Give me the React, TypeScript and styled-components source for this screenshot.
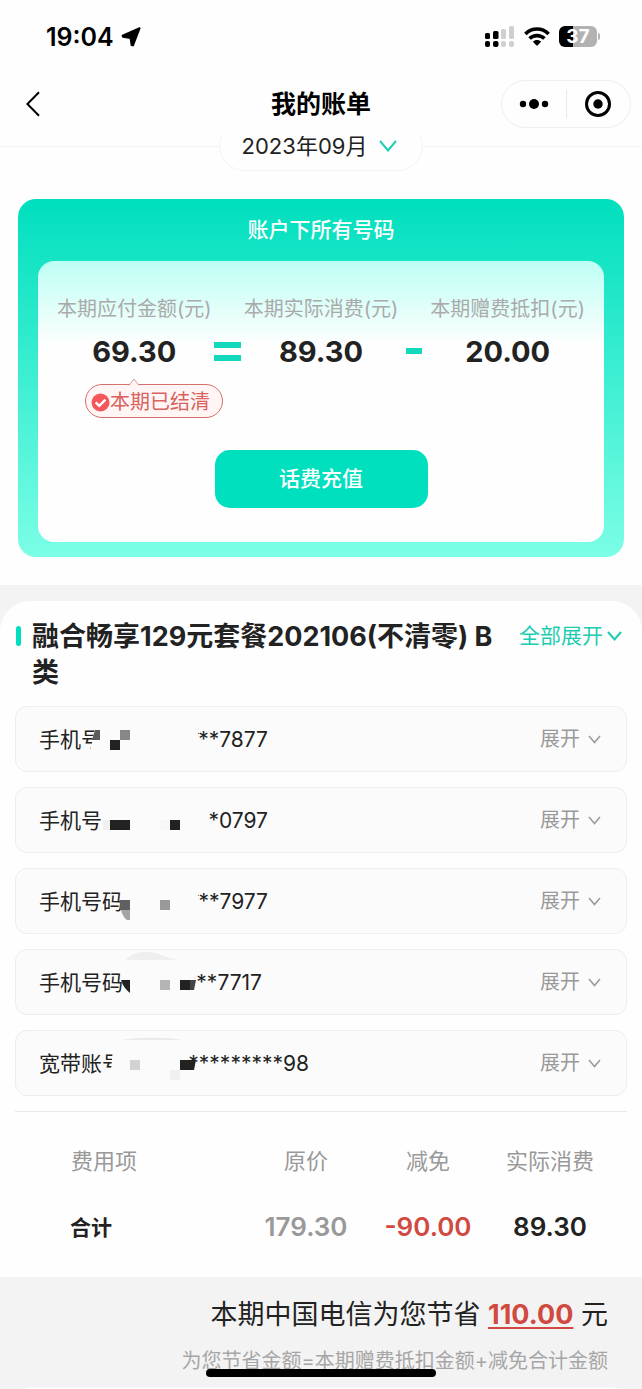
import React from "react";
import styled, { createGlobalStyle } from "styled-components";

const teal = "#00dfbe";
const ink = "#222222";
const grey = "#999999";
const red = "#d14a41";

const GlobalStyle = createGlobalStyle`
  *, *::before, *::after { box-sizing: border-box; }
  body {
    margin: 0;
    background: #fefefe;
    color: ${ink};
    font-family: Inter, "Noto Sans CJK SC", sans-serif;
  }
  button {
    margin: 0;
    padding: 0;
    border: 0;
    background: none;
    color: inherit;
    font: inherit;
    cursor: pointer;
  }
  h1, h2, p { margin: 0; font-weight: inherit; }
  svg { display: block; flex: none; }
`;

const Page = styled.div`
  min-height: 100vh;
  background: #fefefe;
`;

/* ---------- status bar and navigation ---------- */

const Header = styled.header`
  position: sticky;
  top: 0;
  z-index: 2;
  background: #fefefe;
`;

const StatusBar = styled.div`
  display: flex;
  align-items: center;
  justify-content: space-between;
  height: 73px;
  padding: 0 42px 0 46px;
`;

const StatusGroup = styled.div<{ $gap: number }>`
  display: flex;
  align-items: center;
  gap: ${(p) => p.$gap}px;
`;

const Clock = styled.span`
  color: #000;
  font-size: 25px;
  font-weight: 600;
  line-height: 30px;
`;

const NavBar = styled.nav`
  display: grid;
  grid-template-columns: 1fr auto 1fr;
  align-items: center;
  height: 63px;
  padding: 0 11px 2px 20px;
`;

const BackButton = styled.button`
  justify-self: start;
  padding: 6px;
`;

const NavTitle = styled.h1`
  color: #000;
  font-size: 25px;
  font-weight: 700;
  line-height: 36px;
  padding: 1px 9px 0 0;
`;

const Capsule = styled.div`
  display: flex;
  align-items: center;
  justify-self: end;
  width: 130px;
  height: 48px;
  border: 1px solid #eeeeee;
  border-radius: 24px;
`;

const CapsuleButton = styled.button`
  display: flex;
  flex: 1;
  align-items: center;
  justify-content: center;
  height: 28px;

  & + & {
    border-left: 1px solid #e8e8e8;
  }
`;

/* ---------- month picker ---------- */

const MonthBar = styled.div`
  display: flex;
  align-items: flex-end;
  height: 35px;
  overflow: hidden;
`;

const MonthRow = styled.div`
  display: flex;
  flex: 1;
  align-items: center;

  &::before,
  &::after {
    content: "";
    flex: 1;
    height: 1px;
    background: #f3f3f3;
  }
`;

const MonthButton = styled.button`
  display: flex;
  align-items: center;
  justify-content: center;
  gap: 12px;
  width: 204px;
  height: 50px;
  padding-right: 3px;
  border: 1px solid #f3f3f3;
  border-radius: 25px;
  font-size: 22px;
  line-height: 20px;
`;

/* ---------- summary card ---------- */

const Summary = styled.section`
  margin: 28px 18px;
  padding: 0 20px 15px;
  border-radius: 18px;
  background: linear-gradient(180deg, ${teal}, #7bfee6);
`;

const SummaryTitle = styled.h2`
  color: #fff;
  font-size: 21px;
  font-weight: 500;
  line-height: 62px;
  text-align: center;
`;

const SummaryBody = styled.div`
  padding: 33px 3px 34px;
  border-radius: 16px;
  background: linear-gradient(180deg, #bdfff4, #fefefe 30%);
`;

const LabelRow = styled.div`
  display: grid;
  grid-template-columns: repeat(3, 1fr);
  color: #aaaaaa;
  font-size: 20px;
  line-height: 30px;
  text-align: center;
  white-space: nowrap;
`;

const FigureRow = styled.div`
  display: grid;
  grid-template-columns: 1fr repeat(5, 2fr) 1fr;
  align-items: center;
  justify-items: center;
  height: 54px;
`;

const Figure = styled.span`
  font-size: 29px;
  font-weight: 700;

  &:first-child {
    grid-column-start: 2;
  }
`;

const PaidBadge = styled.div`
  position: relative;
  display: flex;
  align-items: center;
  width: 138px;
  height: 34px;
  margin: 6px 0 32px 44px;
  padding: 2px 0 0 5px;
  border: 1px solid #d5706c;
  border-radius: 17px;
  background: #fff5f5;
  color: #d9625e;
  font-size: 20px;
  line-height: 30px;
  white-space: nowrap;
`;

const BadgePointer = styled.svg`
  position: absolute;
  top: -7px;
  left: 42px;
`;

const TopUpButton = styled.button`
  display: block;
  width: 213px;
  height: 58px;
  margin: 0 auto;
  padding-bottom: 4px;
  border-radius: 15px;
  background: ${teal};
  color: #fff;
  font-size: 21px;
  font-weight: 500;
`;

/* ---------- plan details ---------- */

const Band = styled.div`
  padding-top: 16px;
  background: #f3f3f3;
`;

const Plan = styled.section`
  padding: 18px 15px 0;
  border-radius: 30px 30px 0 0;
  background: #fefefe;
`;

const PlanHead = styled.div`
  display: flex;
  align-items: flex-start;
  padding: 0 5px 0 1px;
`;

const Accent = styled.span`
  width: 5px;
  height: 20px;
  margin: 7px 11px 0 0;
  border-radius: 3px;
  background: ${teal};
`;

const PlanTitle = styled.h2`
  flex: 1;
  font-size: 27px;
  font-weight: 700;
  line-height: 36px;
`;

const ExpandAll = styled.button`
  display: flex;
  align-items: center;
  gap: 4px;
  margin-left: 8px;
  color: #1bcdb0;
  font-size: 21px;
  line-height: 34px;
  white-space: nowrap;
`;

const AccountList = styled.ul`
  display: flex;
  flex-direction: column;
  gap: 15px;
  margin: 15px 0;
  padding: 0;
  list-style: none;
`;

const AccountCard = styled.li`
  position: relative;
  display: flex;
  align-items: center;
  justify-content: space-between;
  height: 66px;
  padding: 2px 25px 0 23px;
  border: 1px solid #ededed;
  border-radius: 12px;
  background: #fbfbfb;
`;

const AccountText = styled.div<{ $span: number }>`
  display: flex;
  justify-content: space-between;
  width: ${(p) => p.$span}px;
  font-size: 21px;
  line-height: 30px;
  white-space: nowrap;
`;

const Mosaic = styled.svg`
  position: absolute;
  top: -1px;
  left: -1px;
`;

const ExpandButton = styled.button`
  display: flex;
  align-items: center;
  gap: 8px;
  padding-bottom: 2px;
  color: ${grey};
  font-size: 20px;
  line-height: 30px;
`;

const FeeBlock = styled.div`
  padding: 15px 16px 18px 0;
  border-top: 1px solid #e9e9e9;
`;

const FeeTable = styled.table`
  width: 100%;
  border-spacing: 0;
  table-layout: fixed;
`;

const FeeHead = styled.th<{ $first?: boolean }>`
  width: ${(p) => (p.$first ? "auto" : "122px")};
  height: 66px;
  padding: ${(p) => (p.$first ? "0 0 2px 56px" : "0 0 2px")};
  color: ${grey};
  font-size: 22px;
  font-weight: 400;
  text-align: ${(p) => (p.$first ? "left" : "center")};
  white-space: nowrap;
`;

const TotalLabel = styled.th`
  height: 66px;
  padding: 0 0 0 55px;
  font-size: 21px;
  font-weight: 600;
  text-align: left;
`;

const TotalCell = styled.td<{ $color: string }>`
  padding: 0;
  color: ${(p) => p.$color};
  font-size: 26px;
  font-weight: 600;
  text-align: center;
`;

/* ---------- savings ---------- */

const Savings = styled.section`
  padding: 18px 34px 0;
  background: #f3f3f3;
  text-align: right;
  white-space: nowrap;
`;

const SavingsLine = styled.p`
  font-size: 27px;
  line-height: 40px;
`;

const SavedAmount = styled.a`
  color: ${red};
  font-size: 27px;
  font-weight: 700;
  text-decoration: underline;
  text-decoration-thickness: 2px;
  text-underline-offset: 3px;
`;

const SavingsNote = styled.p`
  margin-top: 11px;
  color: #a6a6a6;
  font-size: 20px;
  line-height: 30px;
`;

const NextPanel = styled.div`
  height: 13px;
  padding: 11px 15px 0;
  overflow: hidden;
  background: #f3f3f3;

  &::before {
    content: "";
    display: block;
    height: 40px;
    border-radius: 16px;
    background: #fefefe;
  }
`;

const HomeIndicator = styled.div`
  position: fixed;
  bottom: 12px;
  left: 50%;
  z-index: 3;
  width: 230px;
  height: 8px;
  margin-left: -115px;
  border-radius: 4px;
  background: #000;
`;

/* ---------- drawings ---------- */

const LocationArrow = () => (
  <svg width="20" height="20" viewBox="0 0 20 20" aria-hidden="true">
    <path
      d="M18.6 1.2 1.6 8.6 2 9.8 9.6 11 10.6 18 12 18.4Z"
      fill="#000"
      stroke="#000"
      strokeWidth="2"
      strokeLinejoin="round"
    />
  </svg>
);

const Signal = () => (
  <svg width="30" height="21" viewBox="0 0 30 21" aria-hidden="true">
    <rect x="0" y="7" width="5" height="6" rx="1.5" fill="#000" />
    <rect x="8" y="5" width="5.5" height="8" rx="1.5" fill="#000" />
    <rect x="16" y="3" width="5" height="10" rx="1.5" fill="#cfcfcf" />
    <rect x="24" y="0" width="5" height="13" rx="1.5" fill="#cfcfcf" />
    <rect x="0" y="15" width="5" height="6" rx="2" fill="#000" />
    <rect x="8" y="15" width="5.5" height="6" rx="2" fill="#000" />
    <rect x="16" y="15" width="5" height="6" rx="2" fill="#cfcfcf" />
    <rect x="24" y="15" width="5" height="6" rx="2" fill="#cfcfcf" />
  </svg>
);

const Wifi = () => (
  <svg width="26" height="19" viewBox="0 0 26 19" aria-hidden="true">
    <g fill="none" stroke="#000" strokeWidth="3.6">
      <path d="M1.4 7C8 0.4 18 0.4 24.6 7" />
      <path d="M5.6 11.6C9.6 7.6 16.4 7.6 20.4 11.6" />
    </g>
    <path d="M8.8 14.6C11 12.4 15 12.4 17.2 14.6L13.8 18.3C13.4 18.7 12.6 18.7 12.2 18.3Z" fill="#000" />
  </svg>
);

const BatteryBox = styled.div`
  display: flex;
  align-items: center;
  gap: 1px;

  &::after {
    content: "";
    width: 2px;
    height: 7px;
    border-radius: 0 2px 2px 0;
    background: #b5b5b5;
  }
`;

const BatteryLevel = styled.span`
  width: 38px;
  height: 21px;
  border-radius: 6px;
  background: linear-gradient(90deg, #000 37%, #b2b2b2 37%);
  color: #fff;
  font-size: 19px;
  font-weight: 700;
  line-height: 21px;
  text-align: center;
`;

const Chevron = ({ w, h, color, stroke }: { w: number; h: number; color: string; stroke: number }) => (
  <svg width={w} height={h} viewBox={`0 0 ${w} ${h}`} aria-hidden="true">
    <path
      d={`M1 1 L${w / 2} ${h - 1.5} L${w - 1} 1`}
      fill="none"
      stroke={color}
      strokeWidth={stroke}
    />
  </svg>
);

const EqualsSign = () => (
  <svg width="27" height="19" viewBox="0 0 27 19" role="img" aria-label="等于">
    <path d="M0 0H27V6H0ZM0 13H27V19H0Z" fill="#12d9bb" />
  </svg>
);

const MinusSign = () => (
  <svg width="16" height="6" viewBox="0 0 16 6" role="img" aria-label="减">
    <path d="M0 0H16V6H0Z" fill="#12d9bb" />
  </svg>
);

/* ---------- data ---------- */

interface Account {
  label: string;
  number: string;
  span: number;
  mask: React.ReactNode;
}

const cover = "#fbfbfb";

const accounts: Account[] = [
  {
    label: "手机号",
    number: "**7877",
    span: 229,
    mask: (
      <>
        <path d="M80 22H90V52H76V42Z" fill={cover} />
        <path d="M80 24H85V34H77Z" fill="#5c5c5c" />
        <path d="M105 24H115V34H105Z" fill="#888" />
        <path d="M95 34H105V44H95Z" fill="#222" />
        <path d="M183 27h1v1h-1Z" fill="#555" />
      </>
    ),
  },
  {
    label: "手机号",
    number: "*0797",
    span: 229,
    mask: (
      <>
        <path d="M88 33H95V43H88Z" fill="#f0f0f0" />
        <path d="M95 33H115V43H95Z" fill="#222" />
        <path d="M145 33H155V43H145Z" fill="#f7f7f7" />
        <path d="M155 33H165V43H155Z" fill="#222" />
      </>
    ),
  },
  {
    label: "手机号码",
    number: "**7977",
    span: 229,
    mask: (
      <>
        <path d="M105 32H115V42H105Z" fill="#606060" />
        <path d="M106 42H115V52H112C109 50 107 46 106 42Z" fill="#a5a5a5" />
        <path d="M145 32H155V42H145Z" fill="#999" />
        <path d="M183 27h1v1h-1Z" fill="#888" />
      </>
    ),
  },
  {
    label: "手机号码",
    number: "**7717",
    span: 223,
    mask: (
      <>
        <path d="M111 11C118 1 134 2 144 5C151 8 157 10 164 11Z" fill="#efefef" />
        <path d="M106 31H115V44C111 41 108 37 106 31Z" fill="#222" />
        <path d="M145 31H155V41H145Z" fill="#b5b5b5" />
        <path d="M165 31H176V41H165Z" fill="#222" />
        <path d="M175 31H181L179 41H175Z" fill="#444" />
      </>
    ),
  },
  {
    label: "宽带账号",
    number: "*********98",
    span: 270,
    mask: (
      <>
        <path d="M108 10C118 7 155 7 167 10Z" fill="#eaeaea" />
        <path d="M98 18H112V52H96V40Z" fill={cover} />
        <path d="M115 30H125V40H115Z" fill="#d3d3d3" />
        <path d="M165 30H181L179 40H165Z" fill="#222" />
        <path d="M155 40H165V50H155Z" fill="#f0f0f0" />
      </>
    ),
  },
];

export default function App() {
  return (
    <>
      <GlobalStyle />
      <Page>
        <Header>
          <StatusBar>
            <StatusGroup $gap={7}>
              <Clock>19:04</Clock>
              <LocationArrow />
            </StatusGroup>
            <StatusGroup $gap={9}>
              <Signal />
              <Wifi />
              <BatteryBox>
                <BatteryLevel>37</BatteryLevel>
              </BatteryBox>
            </StatusGroup>
          </StatusBar>
          <NavBar>
            <BackButton aria-label="返回">
              <svg width="14" height="26" viewBox="0 0 14 26" aria-hidden="true">
                <path d="M13 1.2 1.4 13 13 24.8" fill="none" stroke="#000" strokeWidth="2" />
              </svg>
            </BackButton>
            <NavTitle>我的账单</NavTitle>
            <Capsule>
              <CapsuleButton aria-label="更多">
                <svg width="30" height="10" viewBox="0 0 30 10" aria-hidden="true">
                  <circle cx="4" cy="5" r="3.2" />
                  <circle cx="15" cy="5" r="5" />
                  <circle cx="26" cy="5" r="3.2" />
                </svg>
              </CapsuleButton>
              <CapsuleButton aria-label="关闭">
                <svg width="26" height="26" viewBox="0 0 26 26" aria-hidden="true">
                  <circle cx="13" cy="13" r="11.5" fill="none" stroke="#000" strokeWidth="3" />
                  <circle cx="13" cy="13" r="4.7" />
                </svg>
              </CapsuleButton>
            </Capsule>
          </NavBar>
        </Header>

        <MonthBar>
          <MonthRow>
            <MonthButton>
              2023年09月
              <Chevron w={18} h={12} color="#1fcfb3" stroke={2} />
            </MonthButton>
          </MonthRow>
        </MonthBar>

        <Summary>
          <SummaryTitle>账户下所有号码</SummaryTitle>
          <SummaryBody>
            <LabelRow>
              <span>本期应付金额(元)</span>
              <span>本期实际消费(元)</span>
              <span>本期赠费抵扣(元)</span>
            </LabelRow>
            <FigureRow>
              <Figure>69.30</Figure>
              <EqualsSign />
              <Figure>89.30</Figure>
              <MinusSign />
              <Figure>20.00</Figure>
            </FigureRow>
            <PaidBadge>
              <BadgePointer width="12" height="8" viewBox="0 0 12 8" aria-hidden="true">
                <path d="M1 7.5 6 1 11 7.5" fill="#fff5f5" stroke="#e09a97" />
              </BadgePointer>
              <svg width="19" height="19" viewBox="0 0 19 19" aria-hidden="true">
                <circle cx="9.5" cy="9.5" r="9" fill="#f4565a" />
                <path d="M4.6 9.4 8.3 12.8 14.4 6.6" fill="none" stroke="#fff" strokeWidth="2.4" />
              </svg>
              本期已结清
            </PaidBadge>
            <TopUpButton>话费充值</TopUpButton>
          </SummaryBody>
        </Summary>

        <Band>
          <Plan>
            <PlanHead>
              <Accent />
              <PlanTitle>融合畅享129元套餐202106(不清零) B类</PlanTitle>
              <ExpandAll>
                全部展开
                <Chevron w={15} h={10} color="#1bcdb0" stroke={2} />
              </ExpandAll>
            </PlanHead>

            <AccountList>
              {accounts.map((a, i) => (
                <AccountCard key={i}>
                  <AccountText $span={a.span}>
                    <span>{a.label}</span>
                    <span>{a.number}</span>
                  </AccountText>
                  <Mosaic width="200" height="66" viewBox="0 0 200 66" aria-hidden="true">
                    {a.mask}
                  </Mosaic>
                  <ExpandButton>
                    展开
                    <Chevron w={13} h={9} color="#999" stroke={1.5} />
                  </ExpandButton>
                </AccountCard>
              ))}
            </AccountList>

            <FeeBlock>
              <FeeTable>
                <thead>
                  <tr>
                    <FeeHead scope="col" $first>费用项</FeeHead>
                    <FeeHead scope="col">原价</FeeHead>
                    <FeeHead scope="col">减免</FeeHead>
                    <FeeHead scope="col">实际消费</FeeHead>
                  </tr>
                </thead>
                <tbody>
                  <tr>
                    <TotalLabel scope="row">合计</TotalLabel>
                    <TotalCell $color={grey}>179.30</TotalCell>
                    <TotalCell $color={red}>-90.00</TotalCell>
                    <TotalCell $color={ink}>89.30</TotalCell>
                  </tr>
                </tbody>
              </FeeTable>
            </FeeBlock>
          </Plan>
        </Band>

        <Savings>
          <SavingsLine>
            本期中国电信为您节省 <SavedAmount href="#savings">110.00</SavedAmount> 元
          </SavingsLine>
          <SavingsNote>为您节省金额=本期赠费抵扣金额+减免合计金额</SavingsNote>
        </Savings>
        <NextPanel />
        <HomeIndicator />
      </Page>
    </>
  );
}
